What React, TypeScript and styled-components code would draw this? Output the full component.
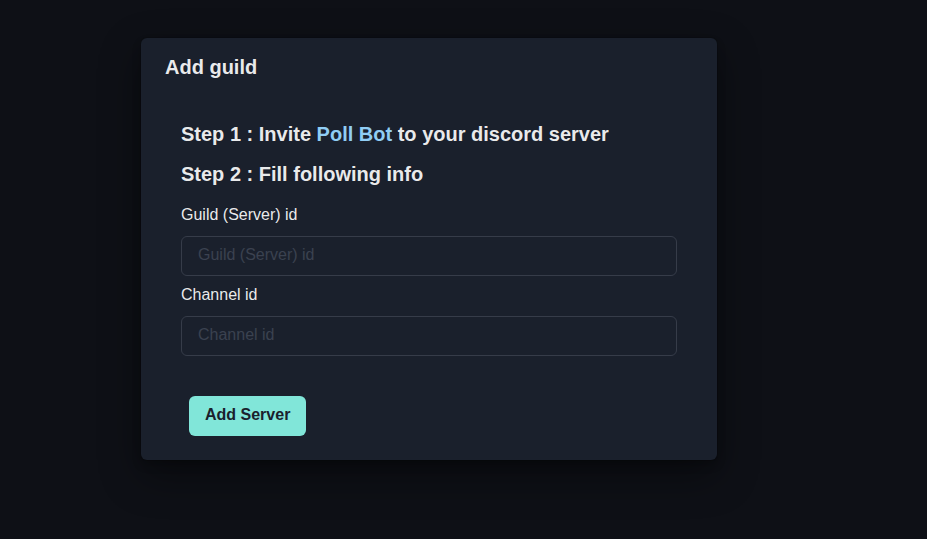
import React from 'react';
import styled, { createGlobalStyle } from 'styled-components';

const GlobalStyle = createGlobalStyle`
    html, body {
        margin: 0;
        padding: 0;
        background: #0e1016;
    }
    body {
        font-family: "Liberation Sans", Arial, sans-serif;
        color: rgba(255, 255, 255, 0.92);
    }
`;

const Page = styled.div`
    min-height: 539px;
    box-sizing: border-box;
    padding: 38px 0 0 141px;
`;

const Card = styled.section`
    width: 576px;
    background: #1a202c;
    border-radius: 6px;
    box-shadow: rgba(0, 0, 0, 0.1) 0 0 0 1px, rgba(0, 0, 0, 0.2) 0 5px 10px,
        rgba(0, 0, 0, 0.4) 0 15px 40px;
`;

const Header = styled.header`
    padding: 14px 24px 18px 24px;
    font-size: 20px;
    line-height: 30px;
    font-weight: 700;
`;

const Body = styled.div`
    padding: 22px 40px 24px 40px;
    display: flex;
    flex-direction: column;
`;

const Step: any = styled.h2`
    margin: ${(props: any) => props.mt || 0}px 0 0 0;
    font-size: 20px;
    line-height: 24px;
    font-weight: 700;
`;

const Link = styled.span`
    color: #90cdf4;
`;

const Label = styled.label`
    margin-top: ${(props: { mt: number }) => props.mt}px;
    font-size: 16px;
    line-height: 24px;
`;

const Input = styled.input`
    margin-top: 9px;
    height: 40px;
    box-sizing: border-box;
    width: 100%;
    padding: 0 16px 2px 16px;
    background: transparent;
    border: 1px solid #363c49;
    border-radius: 6px;
    font-family: inherit;
    font-size: 16px;
    color: rgba(255, 255, 255, 0.92);
    outline: none;

    &::placeholder {
        color: #3b4250;
    }
`;

const Button = styled.button`
    align-self: flex-start;
    margin: 40px 0 0 8px;
    height: 40px;
    padding: 0 16px 2px 16px;
    border: none;
    border-radius: 6px;
    background: #81e6d9;
    color: #1a202c;
    font-family: inherit;
    font-size: 16px;
    font-weight: 700;
`;

export default function App() {
    return (
        <>
            <GlobalStyle />
            <Page>
                <Card>
                    <Header>Add guild</Header>
                    <Body>
                        <Step>
                            Step 1 : Invite <Link>Poll Bot</Link> to your
                            discord server
                        </Step>
                        <Step mt={16}>Step 2 : Fill following info</Step>
                        <Label mt={17}>Guild (Server) id</Label>
                        <Input placeholder="Guild (Server) id" />
                        <Label mt={7}>Channel id</Label>
                        <Input placeholder="Channel id" />
                        <Button>Add Server</Button>
                    </Body>
                </Card>
            </Page>
        </>
    );
}
